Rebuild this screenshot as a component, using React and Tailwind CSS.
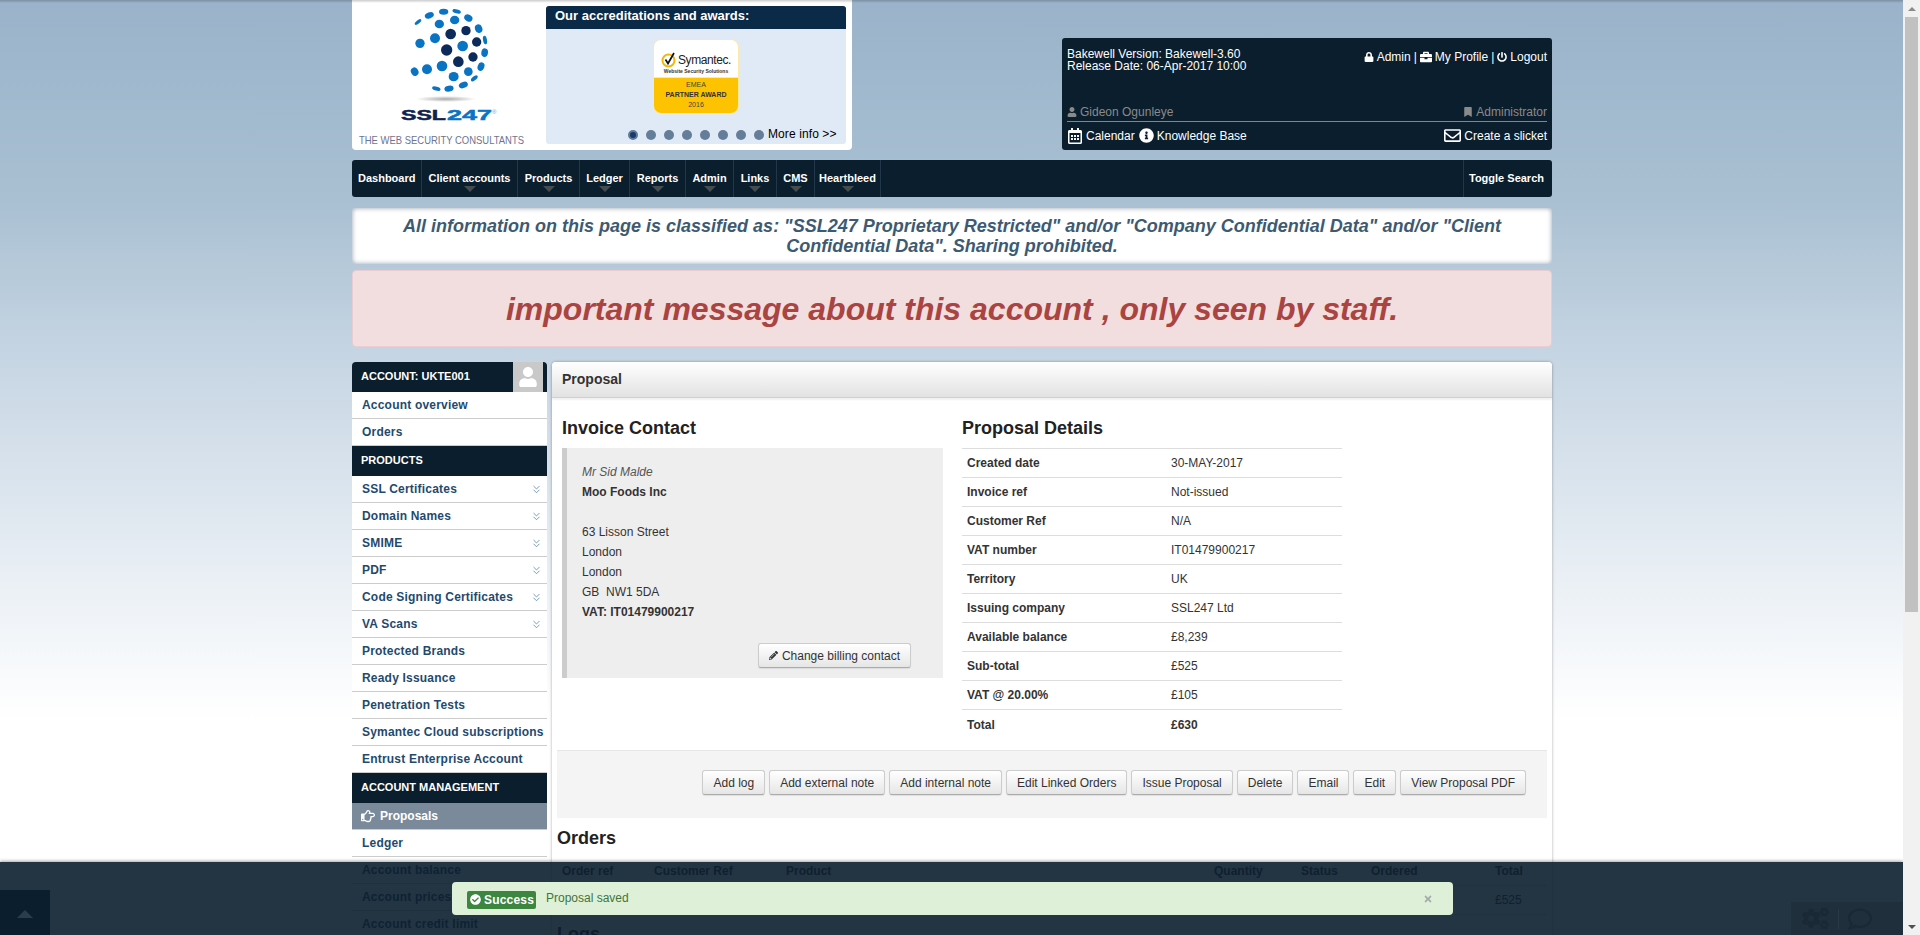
import React from "react";
import { FaLock, FaBriefcase, FaPowerOff, FaUser, FaBookmark, FaRegCalendarAlt, FaInfoCircle, FaRegEnvelope, FaPencilAlt, FaRegHandPointRight, FaCheckCircle, FaTimes, FaCogs, FaRegComment } from "react-icons/fa";
import { ChevronsDown } from "lucide-react";

const lightDots = [
  [240,130,14,14,0],[285,115,15,15,0],[298,72,14,13,0],[344,60,14,13,0],[268,46,14,9,-20],[311,35,14,9,0],
  [350,34,13,6,15],[385,54,13,10,30],[234,66,12,5,-40],[416,86,11,13,-20],[435,120,6,13,-10],[434,158,10,13,10],
  [423,200,10,13,20],[403,235,12,6,-40],[385,215,13,13,0],[368,138,16,16,0],[306,198,16,16,0],[261,208,15,15,0],
  [224,215,11,13,-30],[341,230,15,14,0],[370,255,14,9,-20],[327,266,14,9,-10],[289,266,13,6,15],
];
const darkDots = [[332,102,16],[378,92,14],[410,126,14],[320,150,17],[355,185,16],[399,171,14]];

function Logo() {
  return (
    <svg width="194" height="150" viewBox="0 0 194 150" className="shrink-0">
      <defs>
        <radialGradient id="sh">
          <stop offset="0%" stopColor="#aaaaaa" />
          <stop offset="100%" stopColor="#ffffff" />
        </radialGradient>
      </defs>
      {lightDots.map(([x, y, rx, ry, r], i) => {
        const cx = x / 3 - 12, cy = y / 3;
        return <ellipse key={i} cx={cx} cy={cy} rx={rx / 3} ry={ry / 3} fill="#0a74c4" transform={`rotate(${r} ${cx} ${cy})`} />;
      })}
      {darkDots.map(([x, y, r], i) => (
        <circle key={i} cx={x / 3 - 12} cy={y / 3} r={r / 3} fill="#0d2b5a" />
      ))}
      <ellipse cx="94" cy="99" rx="30" ry="3" fill="url(#sh)" />
      <text x="49" y="120" fontFamily="Liberation Sans" fontWeight="700" fontSize="15.5" fill="#0d2350" textLength="45" lengthAdjust="spacingAndGlyphs" stroke="#0d2350" strokeWidth="0.5">SSL</text>
      <text x="95" y="120" fontFamily="Liberation Sans" fontWeight="700" fontSize="15.5" fill="#0a74c4" textLength="45" lengthAdjust="spacingAndGlyphs" stroke="#0a74c4" strokeWidth="0.5">247</text>
      <text x="140" y="114" fontFamily="Liberation Sans" fontSize="6" fill="#5aa0d8">®</text>
      <text x="7" y="144" fontFamily="Liberation Sans" fontSize="10.5" fill="#6f7390" textLength="165" lengthAdjust="spacingAndGlyphs">THE WEB SECURITY CONSULTANTS</text>
    </svg>
  );
}

function SymantecBadge() {
  return (
    <div className="w-[86px] h-[75px] rounded-[8px] overflow-hidden border border-[#fde9a8] bg-white flex flex-col items-center">
      <div className="h-[38px] w-full flex flex-col items-center justify-end pb-[2px] border-b border-[#fde9a8] shrink-0">
        <div className="flex items-center gap-[1px]">
          <svg width="16" height="17" viewBox="0 0 16 17">
            <circle cx="7.5" cy="9.5" r="6" fill="none" stroke="#f5b800" strokeWidth="2" />
            <path d="M4.5 8.5 L7 12.5 L13 2" fill="none" stroke="#111" strokeWidth="1.7" />
          </svg>
          <span className="text-[12px] leading-[14px] text-[#222] tracking-[-0.4px]">Symantec.</span>
        </div>
        <span className="text-[5px] leading-[7px] font-bold text-[#333]">Website Security Solutions</span>
      </div>
      <div className="flex-1 w-full bg-[#fdc300] flex flex-col items-center pt-[2px] text-[#444]">
        <span className="text-[7px] leading-[10px]">EMEA</span>
        <span className="text-[7px] leading-[10px] font-bold text-[#333]">PARTNER AWARD</span>
        <span className="text-[7px] leading-[10px]">2016</span>
      </div>
    </div>
  );
}

function Header() {
  return (
    <div className="flex justify-between h-[150px]">
      <div className="w-[500px] h-[150px] bg-white rounded-b-[4px] flex">
        <Logo />
        <div className="w-[300px] h-[138px] mt-[6px] rounded-[3px] overflow-hidden bg-[#e0eaf7] flex flex-col">
          <div className="h-[23px] bg-[#0a2a47] text-white text-[13px] leading-[20px] font-bold pl-[9px]">Our accreditations and awards:</div>
          <div className="flex justify-center pt-[10px]"><SymantecBadge /></div>
          <div className="flex items-center mt-[13px] pl-[82px] h-[16px]">
            {[0, 1, 2, 3, 4, 5, 6, 7].map((i) => (
              <span key={i} className={i === 0 ? "w-[10px] h-[10px] rounded-full bg-[#1b3a6b] border-2 border-[#5f7b98] mr-[8px]" : "w-[10px] h-[10px] rounded-full bg-[#647d98] mr-[8px]"} />
            ))}
            <span className="text-[12px] leading-[14px] text-black -ml-[4px] -mt-[2px] tracking-[0.1px]">More info &gt;&gt;</span>
          </div>
        </div>
      </div>
      <div className="w-[490px] h-[112px] mt-[38px] bg-[#0b1e2d] rounded-[3px] px-[5px] text-[12px] text-white flex flex-col">
        <div className="flex justify-between pt-[10px] h-[66px]">
          <div className="leading-[12px]">Bakewell Version: Bakewell-3.60<br />Release Date: 06-Apr-2017 10:00</div>
          <div className="flex items-center h-[12px] mt-[3px] gap-[3px]">
            <FaLock size={10} /><span>Admin</span><span>|</span><FaBriefcase size={12} /><span>My Profile</span><span>|</span><FaPowerOff size={10} /><span>Logout</span>
          </div>
        </div>
        <div className="flex justify-between text-[#8a8a8a] h-[17px] items-center pb-[1px]">
          <div className="flex items-center gap-[3px]"><FaUser size={10} /><span>Gideon Ogunleye</span></div>
          <div className="flex items-center gap-[3px]"><FaBookmark size={10} /><span>Administrator</span></div>
        </div>
        <div className="border-t border-[#7c8790] flex justify-between items-center h-[28px]">
          <div className="flex items-center gap-[3px]"><FaRegCalendarAlt size={16} /><span>Calendar</span><FaInfoCircle size={15} className="ml-[1px]" /><span>Knowledge Base</span></div>
          <div className="flex items-center gap-[3px]"><FaRegEnvelope size={17} /><span>Create a slicket</span></div>
        </div>
      </div>
    </div>
  );
}

const navItems = [["Client accounts", 96], ["Products", 62], ["Ledger", 50], ["Reports", 56], ["Admin", 48], ["Links", 43], ["CMS", 38], ["Heartbleed", 66]];

function Nav() {
  return (
    <div className="mt-[10px] h-[37px] bg-[#0b1e2d] rounded-[3px] flex text-white text-[11px] font-bold">
      <div className="w-[70px] pl-[6px] leading-[36px] border-r border-[#22384a]">Dashboard</div>
      {navItems.map(([t, w]) => (
        <div key={t} className="relative text-center leading-[36px] border-r border-[#22384a]" style={{ width: w }}>
          {t}
          <span className="absolute left-1/2 -translate-x-1/2 bottom-[5px] w-0 h-0 border-l-[6px] border-r-[6px] border-t-[6px] border-l-transparent border-r-transparent border-t-[#454c50]" />
        </div>
      ))}
      <div className="ml-auto w-[89px] border-l border-[#22384a] leading-[36px] pl-[5px]">Toggle Search</div>
    </div>
  );
}

function SideHead({ children }) {
  return <div className="h-[30px] bg-[#0b1e2d] text-white text-[11px] font-bold leading-[29px] pl-[9px] border-b border-[#ccc] box-content -mb-[1px] last:mb-0">{children}</div>;
}

function SideItem({ children, chev, active }) {
  return (
    <div className={active ? "h-[27px] bg-[#7b8a9a] text-white text-[12px] font-bold leading-[26px] pl-[9px] border-b border-[#ccc] flex items-center gap-[5px]" : "h-[27px] bg-white text-[#1f4a6e] text-[12px] font-bold leading-[26px] pl-[10px] pr-[3px] border-b border-[#ccc] flex items-center justify-between tracking-[0.2px]"}>
      {active && <FaRegHandPointRight size={14} />}
      <span>{children}</span>
      {chev && <ChevronsDown size={13} strokeWidth={1.5} className="text-[#5b86ad] mr-[1px]" />}
    </div>
  );
}

function Sidebar() {
  return (
    <div className="w-[195px] shrink-0">
      <div className="h-[30px] bg-[#0b1e2d] rounded-t-[4px] overflow-hidden flex text-white text-[11px] font-bold leading-[29px] pl-[9px]">
        <span className="flex-1">ACCOUNT: UKTE001</span>
        <span className="w-[30px] h-[30px] bg-[#c9c9c9] mr-[4px] flex items-center justify-center"><FaUser size={20} className="text-white" /></span>
      </div>
      <SideItem>Account overview</SideItem>
      <SideItem>Orders</SideItem>
      <SideHead>PRODUCTS</SideHead>
      {["SSL Certificates", "Domain Names", "SMIME", "PDF", "Code Signing Certificates", "VA Scans"].map((t) => <SideItem key={t} chev>{t}</SideItem>)}
      {["Protected Brands", "Ready Issuance", "Penetration Tests", "Symantec Cloud subscriptions", "Entrust Enterprise Account"].map((t) => <SideItem key={t}>{t}</SideItem>)}
      <SideHead>ACCOUNT MANAGEMENT</SideHead>
      <SideItem active>Proposals</SideItem>
      {["Ledger", "Account balance", "Account prices", "Account credit limit"].map((t) => <SideItem key={t}>{t}</SideItem>)}
    </div>
  );
}

function Btn({ children, icon }) {
  return (
    <button className="h-[25px] px-[10px] rounded-[3px] border border-[#ccc] border-b-[#aaa] bg-[linear-gradient(#ffffff,#e6e6e6)] text-[12px] leading-[22px] text-[#333] whitespace-nowrap flex items-center gap-[4px] shadow-[0_1px_1px_rgba(0,0,0,0.08)]">
      {icon}{children}
    </button>
  );
}

const details = [
  ["Created date", "30-MAY-2017"], ["Invoice ref", "Not-issued"], ["Customer Ref", "N/A"], ["VAT number", "IT01479900217"], ["Territory", "UK"],
  ["Issuing company", "SSL247 Ltd"], ["Available balance", "£8,239"], ["Sub-total", "£525"], ["VAT @ 20.00%", "£105"],
];

const H = ({ children, className = "" }) => <h3 className={"text-[18px] leading-[20px] font-bold text-[#222] " + className}>{children}</h3>;

function Main() {
  return (
    <div className="w-[1000px] ml-[5px] bg-white rounded-t-[4px] shadow-[0_0_3px_rgba(0,0,0,0.35)]">
      <div className="h-[36px] rounded-t-[4px] bg-[linear-gradient(#ffffff,#e2e2e2)] border-b border-[#d0d0d0] shadow-[0_2px_2px_rgba(0,0,0,0.06)] pl-[10px] text-[14px] font-bold leading-[34px] text-[#333]">Proposal</div>
      <div className="px-[5px]">
        <div className="flex pl-[5px] pt-[20px]">
          <div className="w-[381px]">
            <H className="mb-[10px]">Invoice Contact</H>
            <div className="h-[230px] bg-[#eee] border-l-[5px] border-[#ccc] pl-[15px] pt-[14px] text-[12px] leading-[20px] text-[#333]">
              <div className="italic text-[#555]">Mr Sid Malde</div>
              <div className="font-bold">Moo Foods Inc</div>
              <div className="h-[20px]" />
              <div>63 Lisson Street</div>
              <div>London</div>
              <div>London</div>
              <div className="whitespace-pre">GB  NW1 5DA</div>
              <div className="font-bold">VAT: IT01479900217</div>
              <div className="flex justify-end mt-[21px] pr-[32px]">
                <Btn icon={<FaPencilAlt size={9} />}>Change billing contact</Btn>
              </div>
            </div>
          </div>
          <div className="w-[380px] ml-[19px]">
            <H className="mb-[10px]">Proposal Details</H>
            <div className="border-t border-[#ddd] text-[12px] text-[#333]">
              {details.map(([a, b]) => (
                <div key={a} className="flex h-[29px] items-center border-b border-[#ddd]">
                  <span className="w-[209px] pl-[5px] font-bold">{a}</span><span>{b}</span>
                </div>
              ))}
              <div className="flex h-[29px] items-center font-bold">
                <span className="w-[209px] pl-[5px]">Total</span><span>£630</span>
              </div>
            </div>
          </div>
        </div>
        <div className="mt-[11px] h-[68px] bg-[#f4f4f4] border-t border-[#e6e6e6] flex justify-end gap-[4px] pt-[19px] pr-[21px]">
          {["Add log", "Add external note", "Add internal note", "Edit Linked Orders", "Issue Proposal", "Delete", "Email", "Edit", "View Proposal PDF"].map((t) => <Btn key={t}>{t}</Btn>)}
        </div>
        <H className="mt-[10px] mb-[9px]">Orders</H>
        <div className="text-[12px] text-[#333]">
          <div className="h-[29px] grid grid-cols-[92px_132px_428px_87px_70px_124px_1fr] items-center pl-[5px] font-bold border-b border-[#ddd]">
            <span>Order ref</span><span>Customer Ref</span><span>Product</span><span>Quantity</span><span>Status</span><span>Ordered</span><span>Total</span>
          </div>
          <div className="h-[29px] grid grid-cols-[92px_132px_428px_87px_70px_124px_1fr] items-center pl-[5px] border-b border-[#ddd]">
            <span /><span /><span /><span /><span /><span /><span>£525</span>
          </div>
        </div>
        <H className="mt-[9px]">Logs</H>
      </div>
    </div>
  );
}

function Scrollbar() {
  return (
    <div className="w-[17px] shrink-0 h-[935px] bg-[#f1f1f1] flex flex-col items-center">
      <div className="h-[17px] flex items-center justify-center shrink-0">
        <span className="w-0 h-0 border-l-[4px] border-r-[4px] border-b-[4px] border-l-transparent border-r-transparent border-b-[#8a8a8a]" />
      </div>
      <div className="w-[13px] h-[595px] bg-[#c1c1c1] shrink-0" />
      <div className="flex-1" />
      <div className="h-[17px] flex items-center justify-center shrink-0">
        <span className="w-0 h-0 border-l-[4px] border-r-[4px] border-t-[4px] border-l-transparent border-r-transparent border-t-[#505050]" />
      </div>
    </div>
  );
}

function BottomBar() {
  return (
    <div className="absolute left-0 right-0 bottom-0 h-[73px] bg-[#0b1e2d]/90 shadow-[0_-1px_3px_rgba(0,0,0,0.35)] flex items-end justify-between">
      <div className="w-[50px] h-[45px] bg-[#0b1e2d] flex items-center justify-center">
        <span className="w-0 h-0 border-l-[8px] border-r-[8px] border-b-[8px] border-l-transparent border-r-transparent border-b-[#2a3d4d] mt-[2px]" />
      </div>
      <div className="w-[112px] h-[33px] bg-[#1f2f3c] flex items-center pl-[11px] text-[#1a2935]">
        <FaCogs size={27} />
        <span className="w-px h-[20px] bg-[#293946] mx-[9px]" />
        <FaRegComment size={24} />
      </div>
      <div className="absolute left-[452px] top-[20px] w-[1001px] h-[33px] bg-[#dff0d8] rounded-[4px] flex items-center pl-[15px] pr-[20px] text-[12px]">
        <span className="w-[69px] h-[18px] bg-[#3c863f] rounded-[2px] text-white font-bold flex items-center pl-[3px] gap-[3px] mt-[2px] tracking-[0.2px]"><FaCheckCircle size={11} />Success</span>
        <span className="ml-[10px] text-[#3c763d] -mt-[1px]">Proposal saved</span>
        <FaTimes size={10} className="ml-auto text-[#a3aeab]" />
      </div>
    </div>
  );
}

export default function App() {
  return (
    <div className="flex h-[935px] overflow-hidden font-['Liberation_Sans',Arial,sans-serif]">
      <div className="relative flex-1 min-w-0 h-[935px] overflow-hidden bg-[linear-gradient(#9ab3ca_0px,#a9c0d2_200px,#c6d5e3_355px,#f0f4f8_620px,#ffffff_720px)]">
        <div className="absolute top-0 left-0 right-0 h-[3px] bg-[linear-gradient(rgba(0,0,0,0.2),rgba(0,0,0,0))] z-10" />
        <div className="w-[1200px] ml-[352px]">
          <Header />
          <Nav />
          <div className="mt-[11px] h-[56px] bg-white rounded-[3px] shadow-[inset_0_0_5px_rgba(60,80,110,0.55)] flex items-center justify-center text-center text-[18px] leading-[20px] font-bold italic text-[#3d5a73]">
            <p>All information on this page is classified as: "SSL247 Proprietary Restricted" and/or "Company Confidential Data" and/or "Client<br />Confidential Data". Sharing prohibited.</p>
          </div>
          <div className="mt-[6px] h-[77px] bg-[#f2dede] border border-[#ebccd1] rounded-[4px] flex items-center justify-center text-[32px] font-bold italic text-[#a94442]">important message about this account , only seen by staff.</div>
          <div className="flex mt-[15px]">
            <Sidebar />
            <Main />
          </div>
        </div>
        <BottomBar />
      </div>
      <Scrollbar />
    </div>
  );
}
